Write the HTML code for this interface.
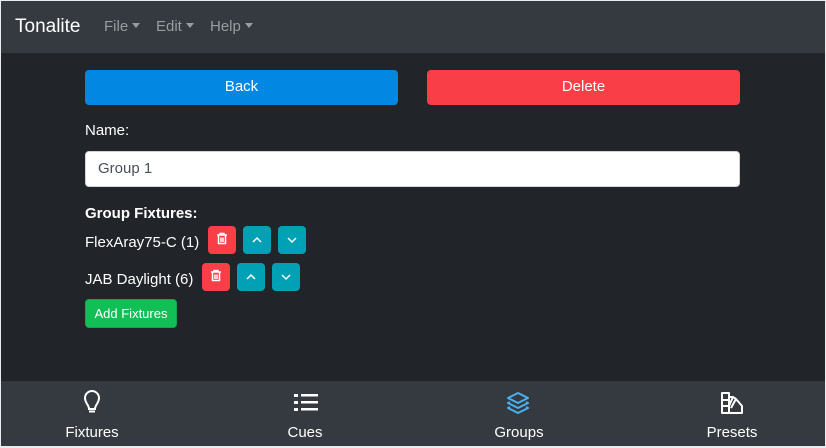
<!DOCTYPE html>
<html><head><style>
*{box-sizing:border-box;margin:0;padding:0}
body{width:826px;height:448px;background:#e9ecef;font-family:"Liberation Sans",sans-serif;overflow:hidden;position:relative}
.main{position:absolute;left:1px;top:1px;width:824px;height:445px;background:#212529}
.nav{position:absolute;left:1px;top:1px;width:824px;height:52px;background:#343a40}
.brand{position:absolute;left:15px;top:16px;font-size:19px;color:#fff}
.menu{position:absolute;top:18px;font-size:15px;color:#9a9da0}
.caret{display:inline-block;border-left:4px solid transparent;border-right:4px solid transparent;border-top:5px solid #9a9da0;vertical-align:middle;margin-left:4px;margin-top:-3px}
.btn{position:absolute;border-radius:4px;color:#fff;text-align:center}
.t{position:absolute;color:#fff;font-size:15px}
.bar{position:absolute;left:1px;top:381px;width:824px;height:65px;background:#343a40}
.lab{position:absolute;top:424px;font-size:15px;color:#fff;width:120px;text-align:center}
svg{position:absolute}
</style></head><body>
<div class="main"></div>
<div class="nav"></div>
<div class="brand">Tonalite</div>
<div class="menu" style="left:104px">File<span class="caret"></span></div>
<div class="menu" style="left:156px">Edit<span class="caret"></span></div>
<div class="menu" style="left:210px">Help<span class="caret"></span></div>

<div class="btn" style="left:85px;top:70px;width:313px;height:35px;background:#0288e2;font-size:15px;line-height:33px">Back</div>
<div class="btn" style="left:427px;top:70px;width:313px;height:35px;background:#fa3e48;font-size:15px;line-height:33px">Delete</div>
<div class="t" style="left:85px;top:122px">Name:</div>
<div style="position:absolute;left:85px;top:151px;width:655px;height:36px;background:#fff;border:1px solid #ced4da;border-radius:4px;font-size:15px;color:#495057;padding:8px 12px">Group 1</div>
<div class="t" style="left:85px;top:205px;font-weight:bold">Group Fixtures:</div>
<div class="t" style="left:85px;top:234px">FlexAray75-C (1)</div>
<div class="t" style="left:85px;top:271px">JAB Daylight (6)</div>

<div class="btn" style="left:208px;top:226px;width:28px;height:28px;background:#fa3e48"></div>
<div class="btn" style="left:243px;top:226px;width:28px;height:28px;background:#00a1b5"></div>
<div class="btn" style="left:278px;top:226px;width:28px;height:28px;background:#00a1b5"></div>
<div class="btn" style="left:202px;top:263px;width:28px;height:28px;background:#fa3e48"></div>
<div class="btn" style="left:237px;top:263px;width:28px;height:28px;background:#00a1b5"></div>
<div class="btn" style="left:272px;top:263px;width:28px;height:28px;background:#00a1b5"></div>
<svg width="826" height="448" style="left:0;top:0">
<g fill="none" stroke="#fff" stroke-width="1.5">
<path d="M217 235h10M220 235v-1.5h4v1.5M218.5 235.5v8h7v-8M221 237.5v4.5M223 237.5v4.5"/>
<path d="M211 272h10M214 272v-1.5h4v1.5M212.5 272.5v8h7v-8M215 274.5v4.5M217 274.5v4.5"/>
<path d="M253 242l4-4 4 4"/><path d="M288 238l4 4 4-4"/>
<path d="M247 279l4-4 4 4"/><path d="M282 275l4 4 4-4"/>
</g></svg>
<div class="btn" style="left:85px;top:299px;width:92px;height:29px;background:#12bf57;font-size:13px;line-height:28px;border:1px solid #0fa84c">Add Fixtures</div>

<div class="bar"></div>
<svg width="826" height="448" style="left:0;top:0">
<g fill="none" stroke="#fff" stroke-width="2">
<path d="M89 409c0-4-4-6-4-11a7 7 0 0 1 14 0c0 5-4 7-4 11z"/>
<path d="M89 411.5h6"/>
</g>
<g fill="#fff"><rect x="294" y="394" width="4" height="3"/><rect x="294" y="401" width="4" height="3"/><rect x="294" y="408" width="4" height="3"/>
<rect x="301" y="394" width="17" height="2.5"/><rect x="301" y="401" width="17" height="2.5"/><rect x="301" y="408" width="17" height="2.5"/></g>
<g fill="none" stroke="#4ab0f0" stroke-width="2" stroke-linejoin="round">
<path d="M518 393l-10 5 10 5 10-5z"/><path d="M510 402l-2 1 10 5 10-5-2-1"/><path d="M510 407l-2 1 10 5 10-5-2-1"/>
</g>
<g fill="none" stroke="#fff" stroke-width="2" stroke-linejoin="round">
<path d="M722 393h7v20h-7z M722 400h7 M722 406h7 M729 397h4l-4 9 M733 397l3 2-5 9 M736 399l6 7v7h-13"/>
</g>
</svg>
<div class="lab" style="left:32px">Fixtures</div>
<div class="lab" style="left:245px">Cues</div>
<div class="lab" style="left:459px">Groups</div>
<div class="lab" style="left:672px">Presets</div>
</body></html>
